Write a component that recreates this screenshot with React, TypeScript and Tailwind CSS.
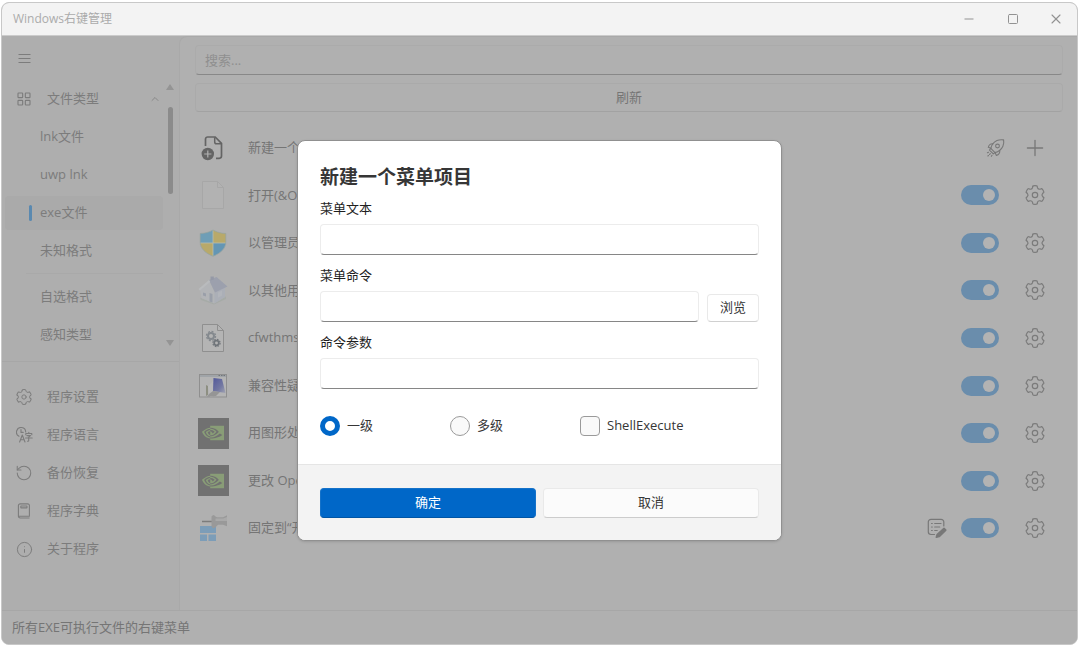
import React, { useState } from 'react';
import { ChevronUp, Info, LayoutGrid, Minus, Plus, RotateCcw, Square, X } from 'lucide-react';
import { SiNvidia } from 'react-icons/si';

const MenuIcon = () => (
  <svg width="14" height="12" viewBox="0 0 14 12" stroke="currentColor" fill="none">
    <path d="M.5 2.500h12M.5 6.500h12M.5 10.500h12" />
  </svg>
);

// One tooth and the valley after it, repeated every 60 degrees
const GearIcon = ({ size }: { size: number }) => (
  <svg width={size} height={size} viewBox="-10 -10 20 20" fill="none" stroke="currentColor" strokeWidth="1.2" strokeLinecap="round" strokeLinejoin="round">
    {[0, 60, 120, 180, 240, 300].map(angle => (
      <path
        key={angle}
        transform={`rotate(${angle})`}
        d="M-2.200 -8.700Q-2.100 -9.100 -1.700 -9.200Q0 -9.500 1.700 -9.200Q2.100 -9.100 2.200 -8.700L2.500 -7.300Q3.150 -5.500 5.060 -5.800L6.430 -6.260"
      />
    ))}
    <circle r="2.700" />
  </svg>
);

const LanguageIcon = () => (
  <svg width="17" height="16" viewBox="0 0 17 16" fill="none" stroke="currentColor" strokeWidth="1.1" strokeLinecap="round" strokeLinejoin="round">
    <path d="M3 9.2A4.6 4.6 0 1 1 9.7 5" />
    <path d="M5 2.6v2.8h2.2" />
    <path d="m3.6 15 2.7-7 2.7 7M4.5 12.8h3.6" />
    <path d="M9.8 7.8V6.5h6v1.3M12.8 5.3v1M10.9 8.6h3.6l-1.8 1.6v3.2q0 1-1.2.8M9.6 11h6.6" />
  </svg>
);

const BookIcon = () => (
  <svg width="14" height="16" viewBox="0 0 14 16" fill="none" stroke="currentColor" strokeWidth="1.1" strokeLinejoin="round">
    <path d="M12.5 15H3.2A1.8 1.8 0 0 1 1.4 13.2V2.6A1.7 1.7 0 0 1 3.1.9h7.7a1.6 1.6 0 0 1 1.6 1.6v10.7h-11" />
    <rect x="3.8" y="3" width="6.2" height="1.9" rx=".4" />
  </svg>
);

const RocketIcon = () => (
  <svg width="20" height="20" viewBox="0 0 20 20" fill="none" stroke="currentColor" strokeWidth="1.1" strokeLinecap="round" strokeLinejoin="round">
    <path d="M4.800 10.300C5.600 6.800 8 4 11 2.600c2-.9 4.200-1.100 6.600-.7.400 2.300.2 4.400-.7 6.300-1.400 3-4.300 5.400-7.900 6.400z" />
    <circle cx="11.500" cy="8" r="1.900" />
    <path d="M7 5.800c-2-.5-4.200.9-4.700 3.500l2.500 1M13.700 12.500c.5 2-.8 4.300-3.300 4.900L9 14.600" />
    <path d="m4.800 10.300-1.300 1.800 3.800 3.800L9 14.600" />
    <path d="M2.500 14.200l-1.300.6M4.300 15.700l-2.400 2.300M6 17.300l-.7 1.200" strokeDasharray="1.200 1.400" />
  </svg>
);

const EditNoteIcon = () => (
  <svg width="20" height="20" viewBox="0 0 20 20" fill="none" stroke="currentColor" strokeWidth="1.2" strokeLinecap="round">
    <path d="M16.800 8V4a2.700 2.700 0 0 0-2.700-2.700H4A2.700 2.700 0 0 0 1.300 4v9.800A2.700 2.700 0 0 0 4 16.500h3.500" />
    <path d="M4.500 5.500h.8M4.500 9h.8M4.500 12.500h.8M7.700 5.500H14M7.700 9h5M7.700 12.500h2.500" />
    <path d="m17 10.300 1.800 1.800-6.600 6.500-2.900.7.8-2.700z" fill="currentColor" strokeWidth="1.500" strokeLinejoin="round" />
  </svg>
);

const NewFileIcon = () => (
  <svg width="24" height="26" viewBox="0 0 24 26" fill="none">
    <path d="M4.500 11V4.200A2.200 2.200 0 0 1 6.700 2h7.500l6.300 6.400v12.700a2.200 2.200 0 0 1-2.200 2.200H15" stroke="#646464" strokeWidth="1.700" />
    <path d="M13.700 2.200v4.700a1.800 1.800 0 0 0 1.800 1.800h4.800" stroke="#646464" strokeWidth="1.500" />
    <circle cx="6.800" cy="19" r="6.200" fill="#646464" />
    <path d="M6.800 15.400v7.200M3.200 19h7.200" stroke="#b0b0b0" strokeWidth="1.200" />
  </svg>
);

const BlankFileIcon = () => (
  <svg width="24" height="30" viewBox="0 0 24 30">
    <path d="M1.500 1.500h15l6 6v21h-21z" fill="#b2b2b2" stroke="#a7a7a7" />
    <path d="M16.500 1.500v6h6" fill="none" stroke="#a7a7a7" />
  </svg>
);

const ShieldIcon = () => (
  <svg width="28" height="28" viewBox="0 0 28 28">
    <path d="M14 1C10.500 3.200 5.500 4.500 1.200 4.500V14H14z" fill="#6f9eb6" />
    <path d="M14 1c3.500 2.200 8.500 3.500 12.800 3.500V14H14z" fill="#b8a96a" />
    <path d="M1.200 14H14v13.200C6.500 24 2 20 1.200 14z" fill="#b8a96a" />
    <path d="M26.800 14H14v13.200C21.500 24 26 20 26.800 14z" fill="#6496b4" />
    <path d="M14 1v26M1.200 14h25.600" stroke="#b7bcae" strokeWidth=".8" />
    <path d="M14 1C10.500 3.200 5.500 4.500 1.200 4.500V13c0 7 5.800 11.500 12.800 14.200C21 24.500 26.800 20 26.800 13V4.500C22.500 4.500 17.500 3.200 14 1z" fill="none" stroke="#95a39d" strokeWidth=".7" />
  </svg>
);

const HouseIcon = () => (
  <svg width="30" height="30" viewBox="0 0 30 30">
    <path d="m2 22.500 14 6 12-7v2.500L16 29.500 3 25z" fill="#a6aba7" />
    <path d="m2 14.500 9-9 5.500 11.500v11.500L3.500 23z" fill="#b2b4b7" />
    <path d="M16.500 16.500 27 11v11l-10.500 6.500z" fill="#abafb7" />
    <path d="M11 5 18.500 2 29.500 11.500 17 17.500z" fill="#9ca0ad" />
    <path d="M.5 14 11 5l1.200 1.700L2 15.500z" fill="#b9bbbd" />
    <path d="M12.500 1.500h3.300v3l-3.300 1z" fill="#9599a6" />
    <path d="M5 17.500l3 1v3l-3-1zM11.500 18l3 1v8.500l-3-1z" fill="#9a9fa9" />
    <path d="m20 17.500 4-2v5l-4 2.200z" fill="#b2b5bb" />
  </svg>
);

const SystemFileIcon = () => (
  <svg width="24" height="30" viewBox="0 0 24 30" fill="none">
    <path d="M1.500 1.500h15l6 6v21h-21z" fill="#b4b4b4" stroke="#8f8f8f" />
    <path d="M16.500 1.500v6h6" stroke="#8f8f8f" />
    <circle cx="10" cy="13" r="3" stroke="#84898e" strokeWidth="2" />
    <circle cx="10" cy="13" r="4.600" stroke="#84898e" strokeWidth="1.200" strokeDasharray="2 1.610" />
    <circle cx="15.500" cy="20" r="2.300" stroke="#70757a" strokeWidth="1.700" />
    <circle cx="15.500" cy="20" r="3.600" stroke="#70757a" strokeWidth="1.200" strokeDasharray="1.600 1.230" />
  </svg>
);

const CompatIcon = () => (
  <svg width="30" height="26" viewBox="0 0 30 26">
    <defs>
      <linearGradient id="screen" x1="0" y1="0" x2="1" y2="1">
        <stop offset="0" stopColor="#52589a" />
        <stop offset=".6" stopColor="#7378a2" />
        <stop offset="1" stopColor="#a1a3b1" />
      </linearGradient>
    </defs>
    <rect x="1.500" y="1.500" width="27" height="22.500" fill="#b4b4b4" stroke="#8f8f8f" />
    <path d="M2 3h26" stroke="#a0a4a8" strokeWidth="2" />
    <path d="M20.500 2.500h1.500M23 2.500h1.500M25.500 2.500H27" stroke="#70757a" />
    <path d="m8 12 2 1v9l-2 1z" fill="#8d8f82" />
    <path d="M10 13.500 15 8v12l5 2-8 1.800z" fill="#bababa" />
    <path d="m15.500 5 8.500 1 3.500 14-12.500-2z" fill="url(#screen)" />
    <path d="m15 18 7 1-4 4-9 1 2-3z" fill="#959595" />
  </svg>
);

const NvidiaIcon = () => (
  <span className="flex size-[31px] items-center justify-center bg-[#717171]">
    <SiNvidia size={22} color="#899d77" />
  </span>
);

const PinIcon = () => (
  <svg width="30" height="30" viewBox="0 0 30 30">
    <path d="M2 13h16v7H2zM2 21.500h7V28H2zM10.500 21.500H18V28h-7.500z" fill="#7c9db8" />
    <path d="M4 8.500h10" stroke="#7c7c7c" strokeWidth="1.500" />
    <path d="M13.500 3.500q2-3 4 0l1.500.8h6l4-2v11l-4-1.500h-5l-2 2q-3 3-4.500-.5z" fill="#999" />
    <path d="M17.500 5.500H25l4-1.500v4H17.500z" fill="#a9a9a9" />
  </svg>
);

const fileTypes = ['lnk文件', 'uwp lnk', 'exe文件', '未知格式'];
const otherTypes = ['自选格式', '感知类型'];

const tools = [
  { label: '程序设置', icon: <GearIcon size={16} /> },
  { label: '程序语言', icon: <LanguageIcon /> },
  { label: '备份恢复', icon: <RotateCcw size={18} strokeWidth={1.4} /> },
  { label: '程序字典', icon: <BookIcon /> },
  { label: '关于程序', icon: <Info size={17} strokeWidth={1.4} /> },
];

const menuItems = [
  { label: '打开(&Open)', icon: <BlankFileIcon /> },
  { label: '以管理员身份运行', icon: <ShieldIcon /> },
  { label: '以其他用户身份运行', icon: <HouseIcon /> },
  { label: 'cfwthms', icon: <SystemFileIcon /> },
  { label: '兼容性疑难解答', icon: <CompatIcon /> },
  { label: '用图形处理器运行', icon: <NvidiaIcon /> },
  { label: '更改 OpenGL', icon: <NvidiaIcon /> },
  { label: '固定到“开始”屏幕', icon: <PinIcon />, editable: true },
];

const TypeButton = ({ label, active, onClick }: { label: string; active: boolean; onClick: () => void }) => (
  <button
    onClick={onClick}
    className={`my-0.5 ml-[3px] flex h-[34px] items-center rounded pl-6 text-left ${active ? 'bg-[#aaaaaa]' : ''}`}
  >
    <span className={`mr-2 h-4 w-[3px] rounded-full ${active ? 'bg-[#5a89b0]' : ''}`} />
    {label}
  </button>
);

const Field = ({ id, label, children }: { id: string; label: string; children?: React.ReactNode }) => (
  <div className="mb-[11px]">
    <label htmlFor={id} className="block h-[25px] leading-[18px] text-[#1f1f1f]">{label}</label>
    <div className="flex items-end gap-2">
      <input
        id={id}
        type="text"
        className="h-[31px] min-w-0 flex-1 rounded border border-[#ececec] border-b-[#868686] bg-white px-2 outline-none"
      />
      {children}
    </div>
  </div>
);

const App = () => {
  const [activeType, setActiveType] = useState('exe文件');
  const [level, setLevel] = useState('single');

  return (
    <div className="flex min-h-screen bg-white pt-0.5 pr-0.5 pb-px pl-px font-['Open_Sans','Noto_Sans_CJK_SC',sans-serif] text-[13px] text-[#757575]">
      <div className="flex flex-1 flex-col overflow-hidden rounded-lg border border-[#c8c8c8] bg-[#aeaeae]">
        {/* Title bar */}
        <header className="flex h-[33px] items-center border-b border-[#cbcbcb] bg-[#f3f3f3] pl-[11px] text-xs text-[#ababab]">
          <h1 className="flex-1">Windows右键管理</h1>
          <div className="flex text-[#929292]">
            <button aria-label="最小化" className="flex h-8 w-11 items-center justify-center"><Minus size={14} strokeWidth={1.7} /></button>
            <button aria-label="最大化" className="flex h-8 w-11 items-center justify-center"><Square size={12} strokeWidth={2} /></button>
            <button aria-label="关闭" className="flex h-8 w-[42px] items-center justify-center"><X size={16} strokeWidth={1.7} /></button>
          </div>
        </header>

        <div className="relative flex flex-1 flex-col">
          <div className="flex flex-1">
            {/* Sidebar */}
            <nav className="flex w-[177px] flex-col text-[#7c7c7c]">
              <button aria-label="菜单" className="flex h-11 items-center pl-4"><MenuIcon /></button>
              <div className="flex">
                <div className="flex flex-1 flex-col">
                  <button className="flex h-[38px] items-center pl-3.5">
                    <LayoutGrid size={16} strokeWidth={1.700} />
                    <span className="ml-[15px] flex-1 text-left">文件类型</span>
                    <ChevronUp size={12} strokeWidth={1.5} className="mr-0.5" />
                  </button>
                  {fileTypes.map(t => (
                    <TypeButton key={t} label={t} active={t === activeType} onClick={() => setActiveType(t)} />
                  ))}
                  <div className="mt-[3px] mb-1 ml-6 h-px bg-[#a9a9a9]" />
                  {otherTypes.map(t => (
                    <TypeButton key={t} label={t} active={t === activeType} onClick={() => setActiveType(t)} />
                  ))}
                </div>
                {/* Scrollbar */}
                <div className="flex w-4 flex-col items-center pt-1 pr-0.5 pb-2">
                  <svg width="8" height="6" viewBox="0 0 8 6"><path d="M4 0 8 6H0z" fill="#949494" /></svg>
                  <div className="mt-[17px] h-[87px] w-[5px] rounded-full bg-[#8b8b8b]" />
                  <svg width="8" height="6" viewBox="0 0 8 6" className="mt-auto"><path d="M4 6 8 0H0z" fill="#949494" /></svg>
                </div>
              </div>
              <div className="mt-[7px] h-px bg-[#a7a7a7]" />
              <div className="pt-4">
                {tools.map(tool => (
                  <button key={tool.label} className="flex h-[38px] w-full items-center pl-3">
                    <span className="flex w-5 justify-center">{tool.icon}</span>
                    <span className="ml-[13px]">{tool.label}</span>
                  </button>
                ))}
              </div>
            </nav>

            {/* Menu list */}
            <main className="flex flex-1 flex-col rounded-tl-lg border-t border-l border-[#a9a9a9] bg-[#b0b0b0] pt-2 pr-3.5 pb-[58px] pl-[15px]">
              <input
                type="search"
                aria-label="搜索"
                placeholder="搜索..."
                className="h-[30px] rounded border border-[#ababab] border-b-[#888888] px-[9px] placeholder-[#8f8f8f] outline-none"
              />
              <button className="mt-2 h-[29px] rounded border border-[#aaaaaa] border-b-[#a2a2a2]">刷新</button>
              <div className="mt-3 grid flex-1 auto-rows-fr">
                <div className="flex items-center pr-[17px]">
                  <span className="flex w-9 justify-center"><NewFileIcon /></span>
                  <span className="ml-[17px] flex-1">新建一个菜单项目</span>
                  <button aria-label="快速新建" className="mr-[18px] text-[#787878]"><RocketIcon /></button>
                  <button aria-label="添加" className="text-[#787878]"><Plus size={26} strokeWidth={1.2} className="-mx-0.5" /></button>
                </div>
                {menuItems.map(item => (
                  <div key={item.label} className="flex items-center pr-[18px]">
                    <span className="flex w-9 justify-center">{item.icon}</span>
                    <span className="ml-[17px] flex-1">{item.label}</span>
                    {item.editable && (
                      <button aria-label="编辑" className="mr-3.5 text-[#787878]"><EditNoteIcon /></button>
                    )}
                    <input
                      type="checkbox"
                      role="switch"
                      aria-label={item.label}
                      defaultChecked
                      className="mr-[26px] flex h-5 w-[38px] appearance-none items-center rounded-full bg-[#8a8a8a] px-1 before:size-3 before:rounded-full before:bg-[#b3b3b3] checked:justify-end checked:bg-[#6a8dac]"
                    />
                    <button aria-label="设置" className="text-[#7b7b7b]"><GearIcon size={20} /></button>
                  </div>
                ))}
              </div>
            </main>
          </div>

          <footer className="flex h-[34px] items-center border-t border-[#a7a7a7] bg-[#b0b0b0] pl-2.5">
            所有EXE可执行文件的右键菜单
          </footer>

          {/* New item dialog */}
          <div className="absolute inset-0 flex items-center justify-center">
            <form
              role="dialog"
              aria-labelledby="dialog-title"
              onSubmit={e => e.preventDefault()}
              className="w-[485px] overflow-hidden rounded-lg border border-[#909090] bg-white text-[#363636] shadow-sm"
            >
              <div className="px-[22px] pt-[23px] pb-7">
                <h2 id="dialog-title" className="mb-2 text-[19px] leading-[27px] font-bold">新建一个菜单项目</h2>
                <Field id="item-text" label="菜单文本" />
                <Field id="item-command" label="菜单命令">
                  <button type="button" className="h-7 w-[52px] rounded border border-[#e9e9e9] border-b-[#d0d0d0]">浏览</button>
                </Field>
                <Field id="item-args" label="命令参数" />
                <div className="flex pt-4">
                  <label className="flex w-[130px] items-center gap-[7px]">
                    <input
                      type="radio"
                      name="level"
                      checked={level === 'single'}
                      onChange={() => setLevel('single')}
                      className="size-5 appearance-none rounded-full border border-[#9a9a9a] bg-[#f9f9f9] checked:border-5 checked:border-[#0067c8] checked:bg-white"
                    />
                    一级
                  </label>
                  <label className="flex w-[130px] items-center gap-[7px]">
                    <input
                      type="radio"
                      name="level"
                      checked={level === 'multi'}
                      onChange={() => setLevel('multi')}
                      className="size-5 appearance-none rounded-full border border-[#9a9a9a] bg-[#f9f9f9] checked:border-5 checked:border-[#0067c8] checked:bg-white"
                    />
                    多级
                  </label>
                  <label className="flex items-center gap-[7px]">
                    <input
                      type="checkbox"
                      className="size-5 appearance-none rounded border border-[#9a9a9a] bg-[#f9f9f9] checked:border-[#0067c8] checked:bg-[#0067c8]"
                    />
                    ShellExecute
                  </label>
                </div>
              </div>
              <div className="grid grid-cols-2 gap-[7px] border-t border-[#e5e5e5] bg-[#f3f3f3] px-[22px] pt-[23px] pb-[22px]">
                <button type="submit" className="h-[30px] rounded border border-[#1572c9] border-b-[#0055a5] bg-[#0067c8] text-white">确定</button>
                <button type="button" className="h-[30px] rounded border border-[#e9e9e9] border-b-[#cccccc] bg-[#fbfbfb]">取消</button>
              </div>
            </form>
          </div>
        </div>
      </div>
    </div>
  );
};

export default App;
